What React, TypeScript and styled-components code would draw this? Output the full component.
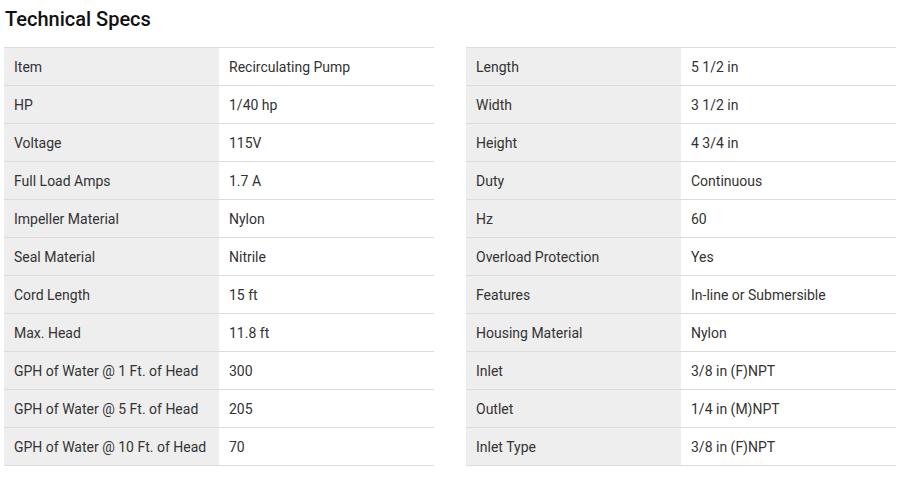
import React from "react";
import styled, { createGlobalStyle } from "styled-components";

const Global = createGlobalStyle`
  html, body { margin: 0; padding: 0; background: #fff; }
  body { font-family: Roboto, "Liberation Sans", sans-serif; color: #333; }
`;

const Page = styled.div`
  padding: 7px 0 0 4px;
  width: 905px;
  box-sizing: border-box;
`;

const Title = styled.h2`
  margin: 0 0 0 1px;
  font-size: 20px;
  font-weight: 500;
  line-height: 24px;
  color: #111;
`;

const Tables = styled.div`
  display: flex;
  gap: 32px;
  margin-top: 16px;
`;

const Table = styled.div`
  width: 430px;
  border-top: 1px solid #dcdcdc;
`;

const Row = styled.div`
  display: grid;
  grid-template-columns: 215px 215px;
  height: 38px;
  border-bottom: 1px solid #dcdcdc;
  box-sizing: border-box;
`;

const Cell = styled.div<{ $label?: boolean }>`
  display: flex;
  align-items: center;
  padding: 0 10px;
  font-size: 14px;
  color: #333;
  background: ${(p) => (p.$label ? "#eeeeee" : "#fff")};
`;

const left: [string, string][] = [
  ["Item", "Recirculating Pump"],
  ["HP", "1/40 hp"],
  ["Voltage", "115V"],
  ["Full Load Amps", "1.7 A"],
  ["Impeller Material", "Nylon"],
  ["Seal Material", "Nitrile"],
  ["Cord Length", "15 ft"],
  ["Max. Head", "11.8 ft"],
  ["GPH of Water @ 1 Ft. of Head", "300"],
  ["GPH of Water @ 5 Ft. of Head", "205"],
  ["GPH of Water @ 10 Ft. of Head", "70"],
];

const right: [string, string][] = [
  ["Length", "5 1/2 in"],
  ["Width", "3 1/2 in"],
  ["Height", "4 3/4 in"],
  ["Duty", "Continuous"],
  ["Hz", "60"],
  ["Overload Protection", "Yes"],
  ["Features", "In-line or Submersible"],
  ["Housing Material", "Nylon"],
  ["Inlet", "3/8 in (F)NPT"],
  ["Outlet", "1/4 in (M)NPT"],
  ["Inlet Type", "3/8 in (F)NPT"],
];

const SpecTable = ({ rows }: { rows: [string, string][] }) => (
  <Table>
    {rows.map(([k, v]) => (
      <Row key={k}>
        <Cell $label>{k}</Cell>
        <Cell>{v}</Cell>
      </Row>
    ))}
  </Table>
);

export default function App() {
  return (
    <>
      <Global />
      <Page>
        <Title>Technical Specs</Title>
        <Tables>
          <SpecTable rows={left} />
          <SpecTable rows={right} />
        </Tables>
      </Page>
    </>
  );
}
